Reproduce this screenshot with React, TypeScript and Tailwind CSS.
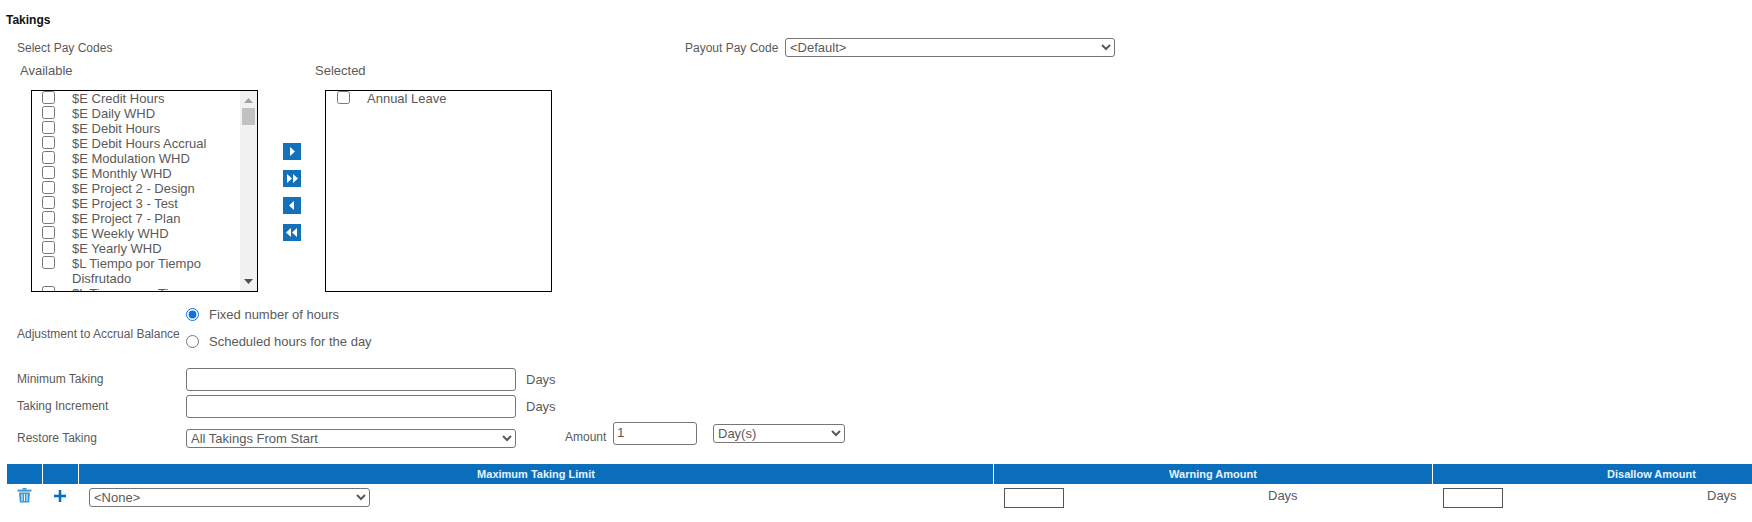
import React from "react";

const payCodes = [
  "$E Credit Hours",
  "$E Daily WHD",
  "$E Debit Hours",
  "$E Debit Hours Accrual",
  "$E Modulation WHD",
  "$E Monthly WHD",
  "$E Project 2 - Design",
  "$E Project 3 - Test",
  "$E Project 7 - Plan",
  "$E Weekly WHD",
  "$E Yearly WHD",
  "$L Tiempo por Tiempo Disfrutado",
  "$L Tiempo por Tiempo",
];

const fieldBorder = "border border-[#767676] rounded-[3px]";

function CodeRow({ label }: { label: string }) {
  return (
    <label className="flex items-start">
      <input type="checkbox" className="m-0 ml-[10px] w-[13px] h-[13px] shrink-0" />
      <span className="ml-[17px] w-[140px]">{label}</span>
    </label>
  );
}

function MoveButton({ points }: { points: string[] }) {
  return (
    <button className="w-[18px] h-[17px] bg-[#1271b8] flex items-center justify-center">
      <svg width="18" height="17" viewBox="0 0 18 17" fill="#ffffff">
        {points.map((p) => (
          <polygon key={p} points={p} />
        ))}
      </svg>
    </button>
  );
}

export default function App() {
  return (
    <div className="w-[1752px] h-[522px] overflow-hidden bg-white text-[#5a5a5a] text-[12px] leading-[14px] font-['Liberation_Sans',Arial,sans-serif]">
      <div className="pt-[13px] pl-[6px] font-bold text-[#111111] h-[27px]">Takings</div>

      <div className="flex items-center h-[19px] mt-[11px] pl-[17px]">
        <div className="w-[668px]">Select Pay Codes</div>
        <div className="w-[100px]">Payout Pay Code</div>
        <select className={`w-[330px] h-[19px] text-[13px] ${fieldBorder}`}>
          <option>{"<Default>"}</option>
        </select>
      </div>

      <div className="flex mt-[7px] pl-[20px] text-[13px]">
        <div className="w-[295px]">Available</div>
        <div>Selected</div>
      </div>

      <div className="flex mt-[12px] pl-[31px] h-[202px] text-[13px] leading-[15px]">
        <div className="w-[227px] border border-black flex">
          <div className="flex-1 overflow-hidden">
            {payCodes.map((code) => (
              <CodeRow key={code} label={code} />
            ))}
          </div>
          <div className="w-[17px] bg-[#f1f1f1] flex flex-col items-center">
            <svg width="9" height="5" viewBox="0 0 9 5" className="mt-[7px]" fill="#a3a3a3">
              <polygon points="4.5,0 9,5 0,5" />
            </svg>
            <div className="w-[13px] h-[17px] mt-[5px] bg-[#c1c1c1]" />
            <svg width="9" height="5" viewBox="0 0 9 5" className="mt-auto mb-[7px]" fill="#505050">
              <polygon points="0,0 9,0 4.5,5" />
            </svg>
          </div>
        </div>

        <div className="w-[67px] pl-[25px] pt-[53px] flex flex-col gap-[10px]">
          <MoveButton points={["7,4 12,8.5 7,13"]} />
          <MoveButton points={["4,4 9,8.5 4,13", "10,4 15,8.5 10,13"]} />
          <MoveButton points={["11,4 6,8.5 11,13"]} />
          <MoveButton points={["8,4 3,8.5 8,13", "14,4 9,8.5 14,13"]} />
        </div>

        <div className="w-[227px] border border-black">
          <label className="flex items-start">
            <input type="checkbox" className="m-0 ml-[11px] w-[13px] h-[13px] shrink-0" />
            <span className="ml-[17px]">Annual Leave</span>
          </label>
        </div>
      </div>

      <div className="flex items-center mt-[12px] pl-[17px] h-[48px]">
        <div className="w-[169px] pt-[12px]">Adjustment to Accrual Balance</div>
        <div className="flex flex-col gap-[8px] text-[13px]">
          <label className="flex items-center h-[20px]">
            <input type="radio" name="adjustment" defaultChecked className="m-0 w-[13px] h-[13px] accent-[#1072e0]" />
            <span className="ml-[10px] mt-[2px]">Fixed number of hours</span>
          </label>
          <label className="flex items-center h-[20px]">
            <input type="radio" name="adjustment" className="m-0 -mt-[1px] w-[13px] h-[13px]" />
            <span className="ml-[10px]">Scheduled hours for the day</span>
          </label>
        </div>
      </div>

      <div className="flex items-center mt-[16px] pl-[17px] h-[23px]">
        <div className="w-[169px] -mt-[1px]">Minimum Taking</div>
        <input className={`w-[330px] h-[23px] ${fieldBorder}`} />
        <span className="ml-[10px] text-[13px]">Days</span>
      </div>
      <div className="flex items-center mt-[4px] pl-[17px] h-[23px]">
        <div className="w-[169px] -mt-[1px]">Taking Increment</div>
        <input className={`w-[330px] h-[23px] ${fieldBorder}`} />
        <span className="ml-[10px] text-[13px]">Days</span>
      </div>

      <div className="flex items-start mt-[4px] pl-[17px] h-[26px]">
        <div className="w-[169px] mt-[9px]">Restore Taking</div>
        <select className={`w-[330px] h-[19px] mt-[7px] text-[13px] ${fieldBorder}`}>
          <option>All Takings From Start</option>
        </select>
        <div className="ml-[49px] w-[48px] mt-[8px]">Amount</div>
        <input defaultValue="1" className={`w-[84px] h-[23px] pl-[3px] pb-[3px] text-[13.33px] ${fieldBorder}`} />
        <select className={`w-[132px] h-[19px] ml-[16px] mt-[2px] text-[13px] ${fieldBorder}`}>
          <option>Day(s)</option>
        </select>
      </div>

      <div className="mt-[16px] ml-[7px] w-[1863px] grid grid-cols-[35px_36px_915px_439px_438px] h-[20px] bg-[#0a6ebd] text-[#e8f3fb] text-[11px] font-bold leading-[20px] text-center">
        <div />
        <div className="border-l border-white" />
        <div className="border-l border-white">Maximum Taking Limit</div>
        <div className="border-l border-white">Warning Amount</div>
        <div className="border-l border-white">Disallow Amount</div>
      </div>

      <div className="ml-[7px] w-[1863px] grid grid-cols-[35px_36px_915px_439px_438px] pt-[4px] text-[13px]">
        <div className="pl-[10px]">
          <svg width="15" height="15" viewBox="0 0 15 15" fill="#3d9bd4">
            <rect x="5.5" y="0" width="4" height="1.6" />
            <rect x="0.5" y="1.6" width="14" height="2" />
            <path d="M2 4.5h11l-.8 10H2.8z" />
            <path d="M5 6v7M7.5 6v7M10 6v7" stroke="#ffffff" strokeWidth="0.9" />
          </svg>
        </div>
        <div className="pl-[12px] pt-[2px]">
          <svg width="12" height="12" viewBox="0 0 12 12" fill="#0a6ebd">
            <rect x="4.7" y="0" width="2.6" height="12" />
            <rect x="0" y="4.7" width="12" height="2.6" />
          </svg>
        </div>
        <div className="pl-[11px]">
          <select className={`w-[281px] h-[19px] text-[13px] ${fieldBorder}`}>
            <option>{"<None>"}</option>
          </select>
        </div>
        <div className="flex pl-[11px]">
          <input className="w-[60px] h-[20px] border border-[#555555]" />
          <span className="ml-[204px] mt-[1px]">Days</span>
        </div>
        <div className="flex pl-[11px]">
          <input className="w-[60px] h-[20px] border border-[#555555]" />
          <span className="ml-[204px] mt-[1px]">Days</span>
        </div>
      </div>
    </div>
  );
}
